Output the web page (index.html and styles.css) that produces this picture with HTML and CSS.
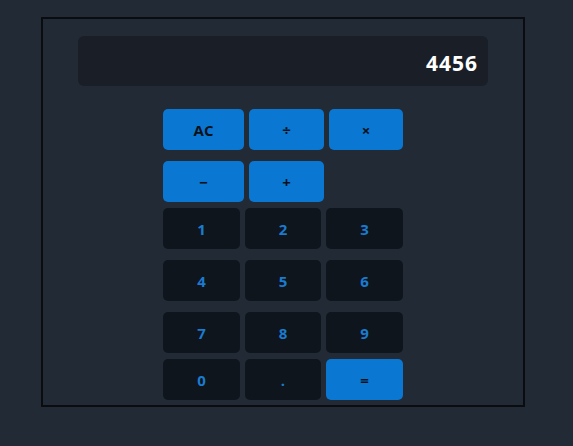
FILE: index.html
```html
<!DOCTYPE html>
<html>
<head>
<meta charset="utf-8">
<link rel="stylesheet" href="styles.css">
</head>
<body>
<div class="calc">
  <div class="display">4456</div>
  <div class="keypad">
    <div class="row ops">
      <button class="key op w81">AC</button>
      <button class="key op w75">÷</button>
      <button class="key op w74">×</button>
    </div>
    <div class="row ops gap11">
      <button class="key op w81">−</button>
      <button class="key op w75">+</button>
    </div>
    <div class="row gap6">
      <button class="key num w77">1</button>
      <button class="key num w76">2</button>
      <button class="key num w77">3</button>
    </div>
    <div class="row gap11">
      <button class="key num w77">4</button>
      <button class="key num w76">5</button>
      <button class="key num w77">6</button>
    </div>
    <div class="row gap11">
      <button class="key num w77">7</button>
      <button class="key num w76">8</button>
      <button class="key num w77">9</button>
    </div>
    <div class="row gap6">
      <button class="key num w77">0</button>
      <button class="key num w76">.</button>
      <button class="key op w77">=</button>
    </div>
  </div>
</div>
</body>
</html>
```
FILE: styles.css
```css
html, body {
  margin: 0;
  padding: 0;
  background: #212a35;
}
body {
  font-family: "Open Sans", "Noto Sans", sans-serif;
  padding: 17px 0 0 41px;
}
.calc {
  box-sizing: border-box;
  width: 484px;
  height: 390px;
  border: 2px solid #0a0c10;
  background: #212a35;
  display: flex;
  flex-direction: column;
  align-items: center;
  padding-top: 17px;
}
.display {
  box-sizing: border-box;
  width: 410px;
  height: 50px;
  background: #1a1f27;
  border-radius: 6px;
  color: #ffffff;
  font-weight: bold;
  font-size: 21px;
  letter-spacing: 1px;
  text-align: right;
  padding-right: 10px;
  line-height: 54px;
}
.keypad {
  width: 240px;
  margin-top: 23px;
  display: flex;
  flex-direction: column;
}
.row {
  display: flex;
  gap: 5px;
}
.gap11 { margin-top: 11px; }
.gap6 { margin-top: 6px; }
.key {
  box-sizing: border-box;
  height: 41px;
  border: none;
  border-radius: 5px;
  padding: 0;
  font-family: "Open Sans", "Noto Sans", sans-serif;
  font-weight: bold;
  font-size: 15px;
}
.op {
  background: #0a77d3;
  color: #0c1118;
}
.num {
  background: #0e151c;
  color: #1a7bd0;
}
.w81 { width: 81px; }
.w75 { width: 75px; }
.w74 { width: 74px; }
.w77 { width: 77px; }
.w76 { width: 76px; }
```
